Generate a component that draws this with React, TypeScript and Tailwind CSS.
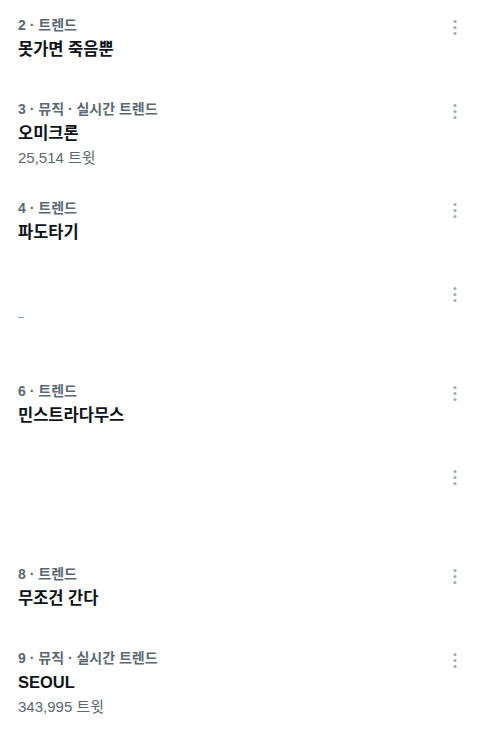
type Trend = {
  rank?: number
  category?: string
  title?: string
  count?: string
  tall: boolean
  dash?: boolean
}

const trends: Trend[] = [
  { rank: 2, category: '트렌드', title: '못가면 죽음뿐', tall: false },
  { rank: 3, category: '뮤직 · 실시간 트렌드', title: '오미크론', count: '25,514 트윗', tall: true },
  { rank: 4, category: '트렌드', title: '파도타기', tall: false },
  { tall: true, dash: true },
  { rank: 6, category: '트렌드', title: '민스트라다무스', tall: false },
  { tall: true },
  { rank: 8, category: '트렌드', title: '무조건 간다', tall: false },
  { rank: 9, category: '뮤직 · 실시간 트렌드', title: 'SEOUL', count: '343,995 트윗', tall: true },
]

const MoreIcon = () => (
  <svg width="6" height="18" viewBox="0 0 6 18" className="block">
    <circle cx="3" cy="2.5" r="1.6" fill="#a3acb5" />
    <circle cx="3" cy="8.5" r="1.6" fill="#a3acb5" />
    <circle cx="3" cy="14.5" r="1.6" fill="#a3acb5" />
  </svg>
)

const TrendRow = ({ trend }: { trend: Trend }) => (
  <div className={`flex justify-between pl-[18px] pr-[22px] pt-[15px] ${trend.tall ? 'h-[99px]' : 'h-[84px]'}`}>
    <div className="flex flex-col">
      {trend.rank ? (
        <>
          {/* Meta */}
          <div className="text-[14px] leading-[20px] font-semibold text-[#5b6873]">
            {trend.rank} · {trend.category}
          </div>
          {/* Title */}
          <div className="mt-[2px] text-[16.5px] leading-[24px] font-bold text-[#0f1419]">{trend.title}</div>
          {trend.count && (
            <div className="mt-[3px] text-[15px] leading-[20px] text-[#5b6873]">{trend.count}</div>
          )}
        </>
      ) : (
        trend.dash && <div className="mt-[35px] h-px w-[6px] bg-[#9aa4ad]" />
      )}
    </div>
    <div className="pt-[4px]">
      <MoreIcon />
    </div>
  </div>
)

export default function App() {
  return (
    <div
      className="w-[480px] h-[732px] overflow-hidden bg-white"
      style={{ fontFamily: '"Liberation Sans", "Noto Sans CJK KR", sans-serif' }}
    >
      {trends.map((t, i) => (
        <TrendRow key={i} trend={t} />
      ))}
    </div>
  )
}
